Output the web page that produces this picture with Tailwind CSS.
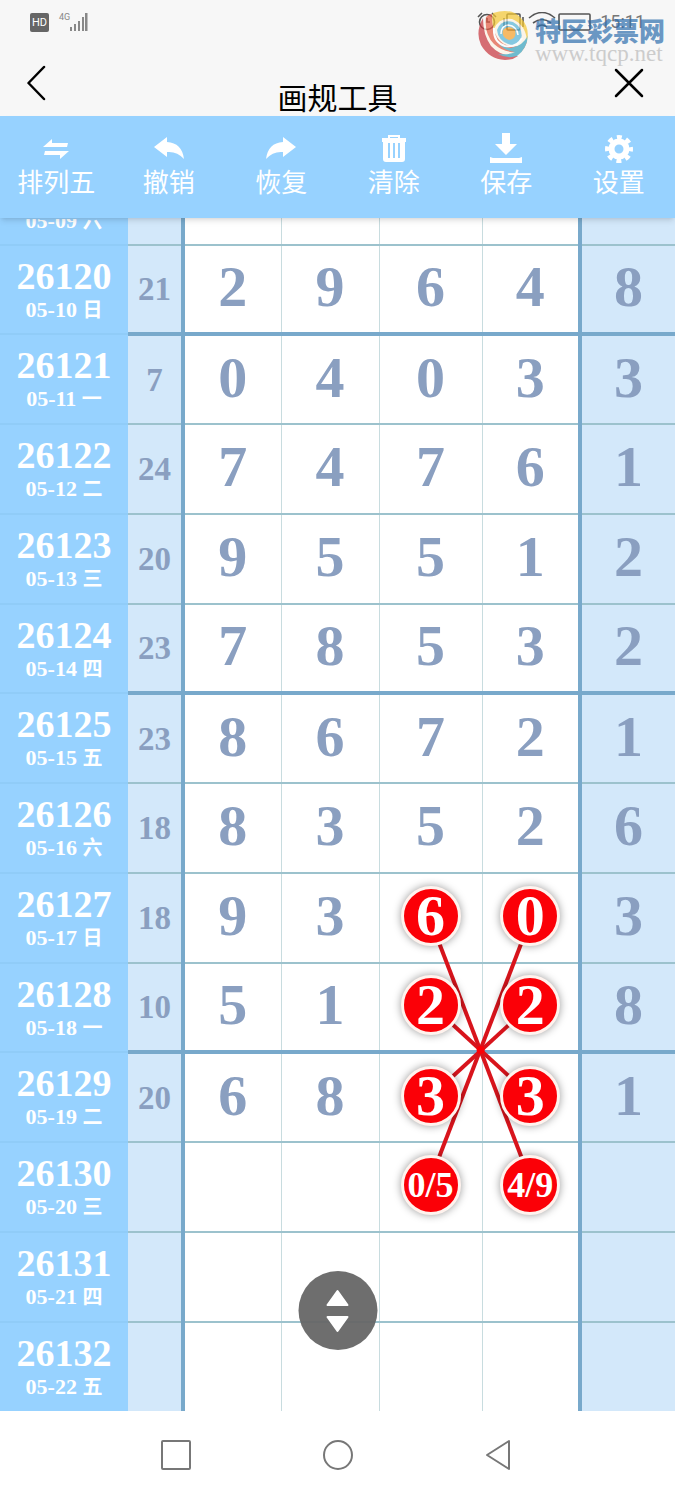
<!DOCTYPE html>
<html lang="zh-CN">
<head>
    <meta charset="UTF-8">
    <meta name="viewport" content="width=device-width, initial-scale=1.0">
    <title>画规工具</title>
    <script src="https://cdn.jsdelivr.net/npm/@tailwindcss/browser@4"></script>
</head>
<body class="bg-white font-['Noto_Sans_CJK_SC',sans-serif]">

    <!-- Status bar + title -->
    <header class="relative bg-[#f7f7f7] h-[116px]">
        <div class="flex items-center justify-between h-[44px] px-[30px]">
            <div class="flex items-start gap-[10px] text-[#666]">
                <span class="w-[19px] h-[19px] rounded-xs bg-[#666] text-white text-[11px] leading-[19px] text-center font-['Roboto',sans-serif]">HD</span>
                <span class="flex items-start">
                    <span class="text-[9px] leading-[8px] font-['Roboto',sans-serif] text-[#888]">4G</span>
                    <svg class="w-[18px] h-[19px]" viewBox="0 0 18 19" fill="#888"><path d="M0 14h2v4H0zM4 11h2v7H4zM8 8h2v10H8zM12 4h2v14h-2zM15 0h2.500v18H15z"/></svg>
                </span>
            </div>
            <div class="flex items-center gap-[6px] text-[#777]">
                <svg class="w-[118px] h-[20px]" viewBox="0 0 118 20" fill="none" stroke="#555" stroke-width="1.600">
                    <circle cx="11" cy="10" r="7.500"/><path d="M2 5l4-4M16 1l4 4M11 6v4h3"/>
                    <rect x="31" y="2" width="13" height="16" rx="1"/><path d="M28 6v8M47 5v10"/>
                    <path d="M53 6q13-11 26 0M57 11q9-7 18 0M61 15q5-4 10 0"/>
                    <rect x="83" y="2" width="31" height="16" rx="1"/>
                </svg>
                <span class="text-[18px] leading-5 font-['Roboto',sans-serif]">15:11</span>
            </div>
        </div>
        <div class="grid grid-cols-3 h-[72px] px-[22px]">
            <button type="button" aria-label="返回" class="w-[30px] h-[78px] flex items-center justify-center">
                <svg class="w-[20px] h-[36px]" viewBox="0 0 20 36" fill="none" stroke="#000" stroke-width="2.500" stroke-linecap="round" stroke-linejoin="round"><path d="M17 2L1.500 18 17 34"/></svg>
            </button>
            <h1 class="pt-[32px] text-[30px] leading-[40px] text-center text-black whitespace-nowrap">画规工具</h1>
            <button type="button" aria-label="关闭" class="justify-self-end w-[48px] h-[78px] flex items-center justify-center">
                <svg class="w-[30px] h-[30px]" viewBox="0 0 30 30" fill="none" stroke="#000" stroke-width="2.500" stroke-linecap="round"><path d="M2 2l26 26M28 2L2 28"/></svg>
            </button>
        </div>

        <!-- Site watermark -->
        <div class="absolute top-[10px] right-[10px] flex gap-[6px] opacity-70">
            <svg class="w-[52px] h-[52px]" viewBox="0 0 52 52">
                <circle cx="27" cy="26" r="24" fill="#fdf3e4"/>
                <path d="M6 8Q-2 22 4 35Q12 49 28 50Q36 50 41 46Q24 47 14 36Q6 25 6 8z" fill="#c7343c"/>
                <path d="M9 7Q7 24 17 34Q28 44 44 42Q48 38 50 32Q38 40 27 34Q15 27 15 4Q12 4 9 7z" fill="#e2583f"/>
                <path d="M18 26Q22 38 34 38Q46 36 51 25Q50 39 40 46Q30 49 21 44Q33 45 38 42Q22 40 18 26z" fill="#36a3bd"/>
                <path d="M16 3Q34-3 44 8Q53 18 50 30Q48 14 35 9Q22 7 17 19Q14 10 16 3z" fill="#f5c833"/>
                <path d="M20 20Q24 9 36 12Q47 18 44 30Q40 37 31 34Q21 30 20 20z" fill="#56b5d9"/>
                <path d="M26 20Q32 14 38 20Q40 29 32 30Q24 27 26 20z" fill="#f6a12b"/>
                <path d="M17 18Q16 32 28 36Q40 38 45 28" fill="none" stroke="#fff" stroke-width="2"/>
                <path d="M24 24Q24 16 31 15Q40 16 41 25" fill="none" stroke="#fff" stroke-width="1.500"/>
            </svg>
            <div class="flex flex-col">
                <span class="text-[26px] leading-[40px] font-black text-[#2f6fae]">特区彩票网</span>
                <span class="text-[23px] leading-[8px] font-['Liberation_Serif',serif] text-[#bbb]">www.tqcp.net</span>
            </div>
        </div>
    </header>

    <!-- Toolbar -->
    <nav class="relative z-20 flex justify-between h-[102px] bg-[#97d2ff] text-white text-[26px] leading-[34px] shadow-md">
        <button type="button" class="flex-1 flex flex-col items-center pt-[16px]">
            <svg class="w-[32px] h-[32px]" viewBox="0 0 32 32" fill="#fff"><path d="M3 15L12 7v4h16l-1 4zM29 19L20 27v-4H4l1-4z"/></svg>
            排列五
        </button>
        <button type="button" class="flex-1 flex flex-col items-center pt-[16px]">
            <svg class="w-[32px] h-[32px]" viewBox="0 0 32 32" fill="#fff"><path d="M1 15L14 5v5q15 1 17 17-7-8-17-7v5z"/></svg>
            撤销
        </button>
        <button type="button" class="flex-1 flex flex-col items-center pt-[16px]">
            <svg class="w-[32px] h-[32px]" viewBox="0 0 32 32" fill="#fff"><path d="M31 15L18 5v5Q3 11 1 27q7-8 17-7v5z"/></svg>
            恢复
        </button>
        <button type="button" class="flex-1 flex flex-col items-center pt-[16px]">
            <svg class="w-[32px] h-[32px]" viewBox="0 0 32 32"><path d="M11 7V4h10v3" fill="none" stroke="#fff" stroke-width="2"/><path d="M4 6h24v4H4zM5 10h22v17q0 3-3 3H8q-3 0-3-3z" fill="#fff"/><path d="M11 11v15M16 11v15M21 11v15" stroke="#97d2ff" stroke-width="2"/></svg>
            清除
        </button>
        <button type="button" class="flex-1 flex flex-col items-center pt-[16px]">
            <svg class="w-[32px] h-[32px]" viewBox="0 0 32 32" fill="#fff"><path d="M12 1h8v11h7L16 23 5 12h7zM0 25l3 1h26l3-1v6H0z"/></svg>
            保存
        </button>
        <button type="button" class="flex-1 flex flex-col items-center pt-[16px]">
            <svg class="w-[32px] h-[32px]" viewBox="0 0 32 32" fill="none" stroke="#fff"><circle cx="16" cy="17" r="7.500" stroke-width="6"/><circle cx="16" cy="17" r="12" stroke-width="4" stroke-dasharray="5 4.425" stroke-dashoffset="2.500"/></svg>
            设置
        </button>
    </nav>

    <!-- Draw history -->
    <main class="relative">
        <table class="w-full table-fixed border-collapse text-center font-bold text-[#8a9fc0] font-['Liberation_Serif','Noto_Sans_CJK_SC',serif]">
            <colgroup>
                <col class="w-[128px]"><col class="w-[55px]"><col class="w-[98px]"><col class="w-[98px]"><col class="w-[103px]"><col class="w-[98px]"><col class="w-[95px]">
            </colgroup>
            <tbody id="rows"></tbody>
        </table>

        <!-- Lines between picked numbers -->
        <svg class="absolute inset-0 w-full h-full pointer-events-none" stroke="#d8141c" stroke-width="4">
            <line x1="65%" y1="724" x2="77.300%" y2="940"/>
            <line x1="77.300%" y1="724" x2="65%" y2="940"/>
            <line x1="66%" y1="800" x2="76.500%" y2="865"/>
            <line x1="76.500%" y1="800" x2="66%" y2="865"/>
            <circle cx="71.200%" cy="832" r="4" fill="#fb0007" stroke="none"/>
        </svg>

        <button type="button" aria-label="滚动" class="absolute z-20 left-1/2 -translate-x-1/2 bottom-[61px] w-[79px] h-[79px] rounded-full bg-[#666]/95 flex items-center justify-center">
            <svg class="w-[24px] h-[44px]" viewBox="0 0 24 44" fill="#fff" stroke="#fff" stroke-width="2" stroke-linejoin="round"><path d="M12 2l10 14H2zM12 42L2 28h20z"/></svg>
        </button>
    </main>

    <!-- System navigation -->
    <footer class="flex items-center h-[88px] bg-white px-[95px]">
        <button type="button" aria-label="最近任务" class="flex-1 flex justify-center"><svg class="w-[32px] h-[32px]" viewBox="0 0 32 32" fill="none" stroke="#777" stroke-width="2"><rect x="2" y="2" width="28" height="28" rx="1"/></svg></button>
        <button type="button" aria-label="主页" class="flex-1 flex justify-center"><svg class="w-[32px] h-[32px]" viewBox="0 0 32 32" fill="none" stroke="#777" stroke-width="2"><circle cx="16" cy="16" r="14"/></svg></button>
        <button type="button" aria-label="后退" class="flex-1 flex justify-center"><svg class="w-[32px] h-[32px]" viewBox="0 0 32 32" fill="none" stroke="#777" stroke-width="2" stroke-linejoin="round"><path d="M26 2v28L4 16z"/></svg></button>
    </footer>

    <script>
        // issue, date, weekday, sum, five digits; "*" marks a picked number
        const draws = [
            ["26120", "05-10", "日", "21", "2", "9", "6", "4", "8"],
            ["26121", "05-11", "一", "7", "0", "4", "0", "3", "3"],
            ["26122", "05-12", "二", "24", "7", "4", "7", "6", "1"],
            ["26123", "05-13", "三", "20", "9", "5", "5", "1", "2"],
            ["26124", "05-14", "四", "23", "7", "8", "5", "3", "2"],
            ["26125", "05-15", "五", "23", "8", "6", "7", "2", "1"],
            ["26126", "05-16", "六", "18", "8", "3", "5", "2", "6"],
            ["26127", "05-17", "日", "18", "9", "3", "*6", "*0", "3"],
            ["26128", "05-18", "一", "10", "5", "1", "*2", "*2", "8"],
            ["26129", "05-19", "二", "20", "6", "8", "*3", "*3", "1"],
            ["26130", "05-20", "三", "", "", "", "*0/5", "*4/9", ""],
            ["26131", "05-21", "四", "", "", "", "", "", ""],
            ["26132", "05-22", "五", "", "", "", "", "", ""],
        ];

        const cellBorder = ["border-r-4 border-r-[#78a9cb]", "border-r border-r-[#c8dcdf]", "border-r border-r-[#c8dcdf]", "border-r border-r-[#c8dcdf]", "border-r-4 border-r-[#78a9cb]", ""];

        function digit(value) {
            if (!value.startsWith("*")) return value;
            const text = value.slice(1);
            const size = text.length > 1 ? "text-[36px]" : "text-[58px]";
            return `<span class="relative z-10 mx-auto flex items-center justify-center w-[60px] h-[60px] rounded-full bg-[#fb0007] border-[3px] border-[#fff3ee] text-white shadow-[0_0_8px_rgba(0,0,0,0.4)] ${size}">${text}</span>`;
        }

        let html = `<tr class="h-[27px]">
            <th class="p-0 bg-[#97d2ff] border-b-2 border-b-[#90ccf8] text-white text-[22px] leading-[24px]"><div class="h-[25px] overflow-hidden"><div class="-mt-[10px]">05-09 <span class="text-[20px]">六</span></div></div></th>
            ${cellBorder.map((b, i) => `<td class="p-0 border-b-2 border-b-[#9cc2cd] ${b} ${i === 0 || i === 5 ? "bg-[#d3e8fa]" : ""}"></td>`).join("")}
        </tr>`;

        draws.forEach((d, i) => {
            const heavy = i % 4 === 0 && i < 12;
            const last = i === draws.length - 1;
            const height = heavy || last ? "h-[89px]" : "h-[90px]";
            const line = heavy ? "border-b-4 border-b-[#78a9cb]" : last ? "" : "border-b-2 border-b-[#9cc2cd]";
            html += `<tr class="${height}">
                <th scope="row" class="p-0 bg-[#97d2ff] ${last ? "" : "border-b-2 border-b-[#90ccf8]"} text-white">
                    <div class="text-[38px] leading-[40px]">${d[0]}</div>
                    <div class="text-[22px] leading-[28px]">${d[1]} <span class="text-[20px]">${d[2]}</span></div>
                </th>
                <td class="p-0 text-[33px] leading-[36px] bg-[#d3e8fa] ${line} ${cellBorder[0]}">${d[3]}</td>
                ${d.slice(4).map((v, j) => `<td class="p-0 pb-1 text-[58px] leading-[60px] ${line} ${cellBorder[j + 1]} ${j === 4 ? "bg-[#d3e8fa]" : ""}">${digit(v)}</td>`).join("")}
            </tr>`;
        });
        document.getElementById("rows").innerHTML = html;
    </script>
</body>
</html>
